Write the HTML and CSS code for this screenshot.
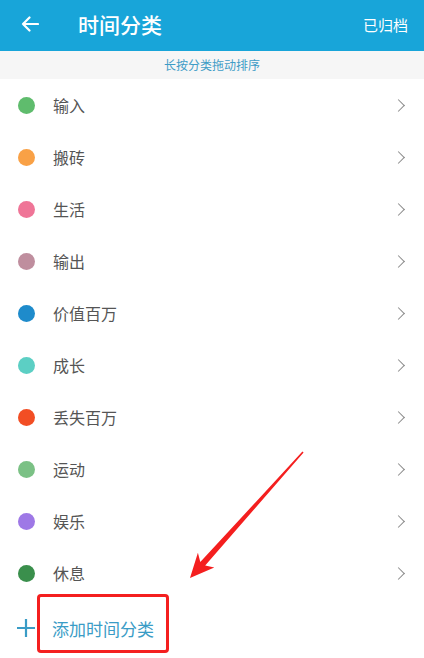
FILE: index.html
```html
<!DOCTYPE html>
<html lang="zh-CN">
<head>
<meta charset="utf-8">
<title>时间分类</title>
<link rel="stylesheet" href="styles.css">
</head>
<body>
<div class="page">
  <header class="appbar">
    <svg class="back" width="18" height="16" viewBox="0 0 18 16"><path d="M17 8H2M8.5 1.5L2 8l6.5 6.5" fill="none" stroke="#fff" stroke-width="2.2" stroke-linecap="round" stroke-linejoin="round"/></svg>
    <h1 class="title">时间分类</h1>
    <span class="archived">已归档</span>
  </header>
  <div class="hint">长按分类拖动排序</div>
  <ul class="list">
    <li class="row"><span class="dot" style="background:#5fbc6d"></span><span class="name">输入</span><span class="chev"></span></li>
    <li class="row"><span class="dot" style="background:#f9a146"></span><span class="name">搬砖</span><span class="chev"></span></li>
    <li class="row"><span class="dot" style="background:#ef7597"></span><span class="name">生活</span><span class="chev"></span></li>
    <li class="row"><span class="dot" style="background:#bf8e9e"></span><span class="name">输出</span><span class="chev"></span></li>
    <li class="row"><span class="dot" style="background:#1e8bcb"></span><span class="name">价值百万</span><span class="chev"></span></li>
    <li class="row"><span class="dot" style="background:#5ccfc4"></span><span class="name">成长</span><span class="chev"></span></li>
    <li class="row"><span class="dot" style="background:#f24e24"></span><span class="name">丢失百万</span><span class="chev"></span></li>
    <li class="row"><span class="dot" style="background:#7bc185"></span><span class="name">运动</span><span class="chev"></span></li>
    <li class="row"><span class="dot" style="background:#9e78e6"></span><span class="name">娱乐</span><span class="chev"></span></li>
    <li class="row"><span class="dot" style="background:#3a8f4c"></span><span class="name">休息</span><span class="chev"></span></li>
  </ul>
  <div class="add">
    <svg class="plus" width="18" height="18" viewBox="0 0 18 18"><path d="M9 0v18M0 9h18" stroke="#3a9cc6" stroke-width="2.2"/></svg>
    <span class="add-label">添加时间分类</span>
  </div>
  <svg class="marks" width="424" height="658" viewBox="0 0 424 658">
    <polygon fill="#f41f1f" points="190,578 214.3,567.5 205.2,565.6 303.6,452.4 302.4,451.6 200.3,562 197.9,552.7"/>
  </svg>
</div>
</body>
</html>
```
FILE: styles.css
```css
*, *::before, *::after { box-sizing: border-box; }
html, body { margin: 0; padding: 0; background: #fff; }
body {
  font-family: "Noto Sans CJK SC", "Noto Sans", sans-serif;
  width: 424px;
  height: 658px;
  overflow: hidden;
}
.page { position: relative; width: 424px; height: 658px; }

.appbar {
  height: 51px;
  background: #18a5d9;
  display: flex;
  align-items: center;
  padding: 0 8px 3px 21px;
  color: #fff;
}
.back { flex: none; }
.title {
  margin: 0 0 0 39px;
  font-size: 21px;
  font-weight: 500;
  line-height: 1;
  flex: 1;
}
.archived { font-size: 15px; line-height: 1; margin-right: 8px; }

.hint {
  height: 28px;
  background: #f6f6f6;
  color: #3e9cc6;
  font-size: 12px;
  display: flex;
  align-items: center;
  justify-content: center;
  padding-bottom: 2px;
}

.list { list-style: none; margin: 0; padding: 0; }
.row {
  height: 52px;
  display: flex;
  align-items: center;
  padding: 0 17px 0 18px;
}
.dot {
  width: 17px;
  height: 17px;
  border-radius: 50%;
  flex: none;
}
.name {
  flex: 1;
  margin-left: 18px;
  font-size: 16px;
  color: #555;
  line-height: 1;
}
.chev {
  width: 9px;
  height: 9px;
  border-top: 1.6px solid #8a8a8a;
  border-right: 1.6px solid #8a8a8a;
  transform: rotate(45deg);
  margin-right: 4px;
}

.add {
  position: relative;
  height: 52px;
  display: flex;
  align-items: center;
  padding-left: 17px;
  margin-top: 3px;
}
.plus { flex: none; }
.add-label {
  margin-left: 17px;
  font-size: 17px;
  color: #3a9cc6;
  line-height: 1;
}
/* red highlight frame around the add action */
.add-label::before {
  content: "";
  position: absolute;
  left: 37px;
  top: -8px;
  width: 132px;
  height: 59px;
  border: 3.5px solid #f41f1f;
  border-radius: 4px;
}
.marks { position: absolute; left: 0; top: 0; pointer-events: none; }
```
